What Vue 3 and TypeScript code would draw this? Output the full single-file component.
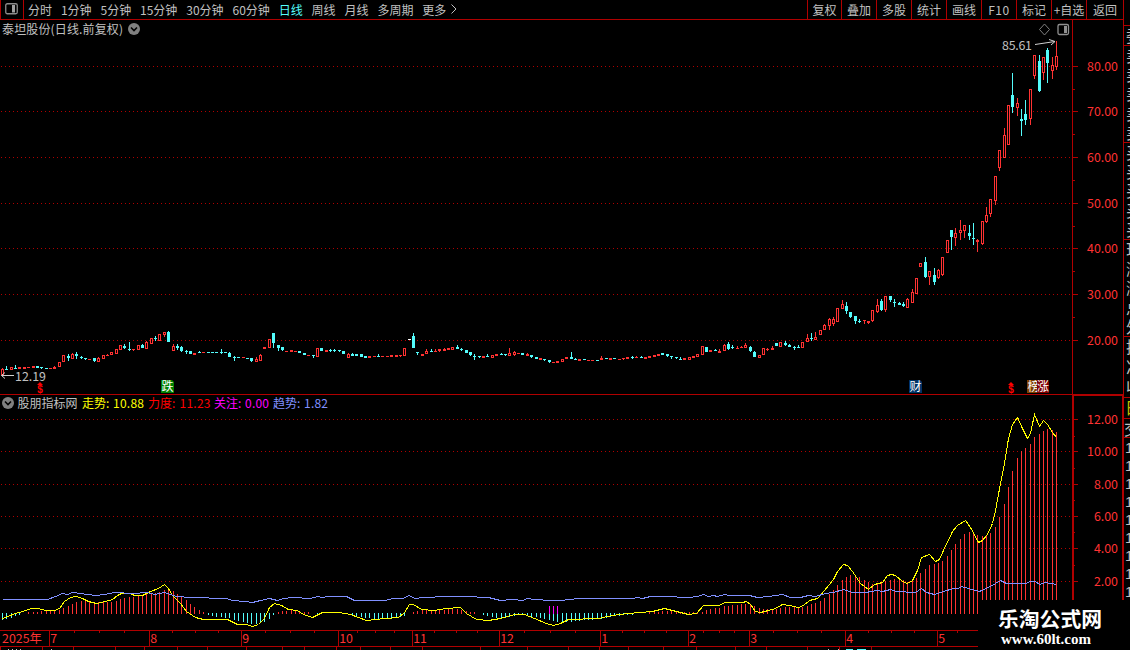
<script setup lang="ts">
interface Candle { x: number; up: boolean; hi: number; top: number; bot: number; lo: number; white: boolean }

const STEP = 1054 / 241
const xAt = (i: number): number => Math.round(2 + i * STEP)

// Each entry: direction, high, body top, body bottom, low (panel units)
const candleSource = `
r 368 369 374 375,c 366 369 369,r 367 367 369,c 365 368 368,r 367 367 368,r 367 367 368,r 367 367 367,r 366 366 367,c 366 366 367,c 367 367 367 368,
c 368 368 368,r 368 368 368,r 366 367 368,r 362 362 366,r 355 355 361,c 354 356 357 360,r 353 354 358,c 352 354 355 358,c 356 357 357 358,c 358 358 358 359,
r 359 359 359,c 358 358 360 361,r 357 358 361,r 355 355 358,r 354 355 355,r 352 352 354,r 349 349 353,r 345 345 349,c 344 346 347 348,c 342 349 349 350,
r 349 349 349 350,r 345 345 349,c 344 345 347,r 341 342 348,r 338 338 343,c 336 338 338 340,r 334 334 340,r 332 332 334 336,c 331 332 341,r 344 346 350,
c 344 346 347 349,c 346 347 350 351,c 350 351 351 353,c 351 351 353,r 353 353 354,c 351 352 352,r 352 352 352,c 352 352 352,c 352 352 352,c 352 352 352,
c 349 352 352 353,c 352 352 352,c 352 353 356,c 356 357 357 360,c 357 357 357,r 357 357 357,c 358 358 358,c 358 358 360 361,r 357 359 361,r 354 355 360,
r 347 347 348,r 339 339 347,c 333 333 342 347,c 345 345 347 350,c 347 347 349 350,r 351 351 351,r 350 350 351,r 351 351 351,c 351 351 352,c 353 353 354,
r 355 355 355,c 355 355 355 357,r 348 348 356,c 348 348 350,r 350 350 351,c 349 350 350 351,c 349 350 350 351,c 350 350 350 351,c 351 351 353,r 353 354 357,
c 353 354 355,c 354 354 355,c 354 354 356,c 356 356 357,r 356 356 357,r 356 356 356,c 354 356 356,r 356 356 356,r 356 356 356,r 355 355 356,
r 355 355 356,r 355 355 355 356,r 348 348 355,w 339 339 339,c 333 336 347,c 352 352 352 354,r 354 354 355,r 349 351 353,c 349 351 351,r 349 351 351,
r 349 349 350 351,r 348 349 350,r 348 348 349,r 347 347 349,c 345 347 348,c 348 349 349 350,c 350 350 352,c 352 352 354 355,c 354 356 356 359,c 356 356 356 357,
r 356 356 357,c 354 356 356,r 355 355 357,r 354 354 355,c 353 354 354,c 354 354 354 355,r 348 353 355,r 351 352 354 355,r 353 353 353,c 353 353 354,
r 353 354 355,c 355 355 356 357,c 357 357 358,r 358 358 359,c 359 359 359 360,c 360 360 361 362,r 362 362 362,r 361 361 362,r 359 359 361,r 357 357 358,
c 352 357 358,c 358 359 359,r 359 359 360,c 359 359 359,r 360 360 360,r 360 360 360,c 360 360 360,r 356 358 359,c 358 358 358,r 358 358 359,
c 358 358 358,r 359 359 359,r 358 358 358 359,r 357 357 358,c 356 357 357 358,r 356 357 357,c 356 357 357,r 357 357 358,r 356 356 357,r 355 355 356,
r 354 354 355,c 353 353 354,c 354 354 355 356,c 356 356 356 358,c 357 357 357 358,c 357 359 359,r 358 358 359,r 357 357 359,r 356 356 357,r 354 354 356,
r 346 346 354,c 347 347 351,r 350 350 351,c 349 350 350,r 349 351 352,r 344 345 350,c 342 344 348 349,c 345 347 347 348,r 346 348 348,r 346 347 347,
r 343 345 347,c 346 347 350 351,c 351 352 356,r 355 355 357,r 348 348 354,r 348 349 349 350,r 346 348 349,c 343 343 345,r 342 342 346,c 341 343 344 345,
c 344 345 346,c 346 347 347 349,c 345 347 347,r 342 342 347,r 334 338 341,c 333 338 338 340,r 332 337 339,r 330 330 334,r 324 325 329,r 318 319 325 329,
r 317 319 323 325,r 308 308 321,r 300 304 308,c 302 306 310 313,c 312 312 316 317,c 316 316 320 323,c 319 321 321 322,r 320 320 320 323,r 321 321 322 323,r 310 310 320 321,
r 299 305 311 312,c 299 301 309 310,r 296 296 309 311,c 296 296 299 301,c 299 302 302 306,c 302 303 304,c 302 304 305 306,r 298 299 307,r 289 292 302,r 278 278 293,
r 263 263 266,c 257 262 276 277,r 271 271 276 284,c 268 275 281 284,r 269 270 277 278,r 257 257 274 275,r 240 240 252,c 230 230 236 249,r 228 233 237 245,r 220 230 232 239,
r 225 225 230 237,c 225 233 235 239,c 223 238 238 244,r 239 240 241 251,r 221 221 243 244,r 207 215 221 222,r 199 199 213 216,r 176 176 200 204,r 150 150 167 170,r 128 135 157,
r 105 105 144,c 73 95 106 112,r 98 103 107 115,c 109 119 120 135,c 100 114 119 124,r 89 89 118 124,r 55 55 75 78,c 55 61 90 91,r 57 57 72 79,c 48 50 62 82,
r 57 65 70 78,r 41 56 66 69`

const candles: Candle[] = candleSource.trim().split(',').map((row, i) => {
  const [kind, h, t, b, l] = row.trim().split(' ')
  return { x: xAt(i), up: kind === 'r', white: kind === 'w', hi: +h, top: +t, bot: +b, lo: +(l ?? b) }
})

// Momentum histogram: far end of every bar, measured against the zero line
const ZERO = 613
const strength: number[] = [
  619, 618, 617, 615, 614, 613, 612.9, 612, 612, 611, 610, 611, 611, 610, 608, 606, 604, 602, 601, 601,
  601, 602, 602, 601, 602, 602, 601, 599, 598, 597, 597, 596, 595, 594, 593, 593, 592, 590, 589, 591,
  594, 597, 600, 604, 607, 610, 612.9, 614, 615, 616, 616, 617, 617, 619, 620, 621, 622, 623, 623, 622,
  621, 618, 614, 612.9, 611, 611, 610, 610, 611, 612, 612.9, 613, 614, 613, 613, 613, 613, 613, 613, 613,
  614, 615, 616, 617, 617, 618, 618, 618, 618, 617, 617, 616, 615, 613, 612, 611, 610, 610, 610, 610,
  610, 610, 609, 609, 609, 610, 611, 612, 612.9, 613, 614, 615, 616, 617, 617, 617, 616, 615, 614, 614,
  615, 616, 616, 617, 618, 619, 620, 621, 621, 621, 621, 620, 620, 619, 619, 619, 618, 618, 617, 616,
  615, 615, 614, 614, 614, 613, 613, 613, 612.9, 612, 612, 611, 611, 611, 611, 612, 612, 612.9, 612.9, 612.9,
  612, 610, 609, 608, 608, 606, 606, 605, 605, 604, 604, 605, 606, 608, 609, 609, 609, 609, 608, 607,
  607, 607, 607, 607, 606, 604, 603, 601, 598, 594, 590, 585, 580, 577, 575, 576, 577, 580, 582, 584,
  583, 582, 581, 580, 579, 579, 580, 582, 581, 578, 573, 569, 565, 564, 563, 561, 556, 550, 544, 539,
  534, 532, 533, 535, 536, 536, 533, 527, 517, 504, 487, 471, 458, 451, 448, 444, 437, 434, 431, 429,
  430, 432,
]
const bars = strength
  .map((v, i) => ({ x: xAt(i), up: v < ZERO, y: v < ZERO ? Math.floor(v) : ZERO, h: v < ZERO ? 614 - Math.floor(v) : v - ZERO + 1, v }))
  .filter((b) => b.v !== ZERO)
const watchBars = [549, 553, 557]

const trend = `2,618 7,616 15,613 22,611 31,608 38,608 45,610 54,610 59,608 64,601 70,597 76,596 82,598 88,601 96,603 105,601
112,599 117,595 121,593 130,593 134,595 142,595 150,591 158,588 164,584 168,588 172,595 180,603 186,611 195,617 203,619 227,619
237,624 246,624 252,626 258,624 264,618 269,607 274,603 281,605 288,609 297,610 303,614 312,617 322,612 338,612 350,614 358,617
366,620 375,619 385,618 398,617 404,612 409,604 413,604 421,609 434,610 445,608 460,607 466,613 476,619 488,620 500,618 514,614
524,614 534,618 546,623 553,625 560,623 568,619 598,618 612,615 628,613 652,611 664,608 676,611 688,614 696,613 703,605 719,605
724,602 742,602 746,601 750,604 755,611 760,612 768,610 775,608 782,604 789,605 798,607 803,605 809,600 817,598 824,590 833,579
837,571 843,564 847,565 852,571 860,583 868,589 874,584 882,582 887,575 891,574 895,575 902,581 907,583 912,580 917,570 921,557
929,554 935,561 939,559 943,550 952,531 957,525 965,520 970,527 978,542 982,540 987,534 992,523 995,510 1000,483 1004,463 1008,438
1012,424 1017,417 1022,428 1027,438 1030,433 1034,414 1039,426 1043,420 1047,424 1052,432 1056,437`

const drift = `2,599 47,599 55,596 62,593 67,594 72,592 80,593 95,595 104,594 114,592 132,593 147,592 154,594 164,592 176,596
190,597 226,598 232,600 244,601 252,602 260,600 269,598 277,600 283,598 292,597 310,598 317,596 322,597 328,596 346,596 354,600
385,600 392,598 402,598 409,595 414,598 424,597 446,596 464,596 488,597 500,600 512,599 522,600 527,598 534,599 550,600 560,600
578,598 632,598 637,597 642,598 650,596 664,596 688,597 697,596 703,594 708,596 713,595 717,596 724,594 729,595 749,595 757,597
768,596 782,594 790,597 800,597 808,595 815,596 825,593 833,592 843,589 852,592 865,592 877,590 882,591 890,589 896,591 915,592
921,588 926,592 934,594 943,591 953,588 958,588 961,586 968,588 979,591 990,586 1000,580 1006,583 1025,583 1030,581 1035,581
1039,584 1045,582 1056,584`

const periods = ['分时', '1分钟', '5分钟', '15分钟', '30分钟', '60分钟', '日线', '周线', '月线', '多周期', '更多']
const tools = ['复权', '叠加', '多股', '统计', '画线', 'F10', '标记', '+自选', '返回']

const priceTicks = [
  { y: 66, t: '80.00' }, { y: 111, t: '70.00' }, { y: 157, t: '60.00' }, { y: 203, t: '50.00' },
  { y: 248, t: '40.00' }, { y: 294, t: '30.00' }, { y: 340, t: '20.00' },
]
const priceMinor = [89, 134, 180, 226, 271, 317]
const subTicks = [
  { y: 419, t: '12.00' }, { y: 451, t: '10.00' }, { y: 484, t: '8.00' },
  { y: 516, t: '6.00' }, { y: 548, t: '4.00' }, { y: 581, t: '2.00' },
]
const subMinor = [436, 468, 500, 532, 565]

const legend = [
  { x: 82, vx: 113, name: '走势:', value: '10.88', c: 'yellow' },
  { x: 148, vx: 179.5, name: '力度:', value: '11.23', c: 'red' },
  { x: 214, vx: 245, name: '关注:', value: '0.00', c: 'magenta' },
  { x: 273, vx: 304, name: '趋势:', value: '1.82', c: 'blue' },
]

const months = [
  { x: 49, t: '7' }, { x: 149, t: '8' }, { x: 241, t: '9' }, { x: 338, t: '10' }, { x: 412, t: '11' }, { x: 499, t: '12' },
  { x: 600, t: '1' }, { x: 688, t: '2' }, { x: 749, t: '3' }, { x: 845, t: '4' }, { x: 937, t: '5' },
]
const weekTicks = [74, 99, 124, 172, 195, 218, 265, 290, 314, 357, 375, 394, 434, 456, 477, 524, 550, 575, 622, 644, 666, 703, 719, 734, 773, 797, 821, 868, 891, 914, 957]
const lowerTicks = [0, 42, 73, 115, 144, 177, 207, 246, 282, 304, 336, 360, 390, 422, 480, 527, 568, 599, 628, 663, 696, 735, 766, 807, 839, 871]

const quoteGroups = [
  { cls: 'ratio', rows: ['委比'] },
  { cls: 'five', rows: ['卖五', '卖四', '卖三', '卖二', '卖一'] },
  { cls: 'five', rows: ['买一', '买二', '买三', '买四', '买五'] },
  { cls: 'five', rows: ['现价', '涨跌', '涨幅', '总量', '外盘'] },
  { cls: 'three', rows: ['换手', '净资', '收益'] },
  { cls: 'tab', rows: ['日'] },
  { cls: 'state', rows: ['交'] },
  { cls: 'deals', rows: ['14', '14', '14', '14', '14', '14', '14', '14', '14'] },
]
</script>

<template>
  <div class="screen">
    <main class="charts">
      <header class="toolbar">
        <div class="panel-toggle">
          <svg width="13" height="12" viewBox="0 0 13 12">
            <rect x="0.75" y="0.75" width="11.5" height="10" rx="1.5" fill="none" stroke="#8c8c8c" stroke-width="1.3" />
            <rect x="7" y="2" width="3" height="7.5" fill="#a0a0a0" />
          </svg>
        </div>
        <nav class="periods">
          <span v-for="p in periods" :key="p" :class="{ active: p === '日线' }">{{ p }}</span>
          <svg class="more" width="6" height="10" viewBox="0 0 6 10"><path d="M0.5 0.5L5 5L0.5 9.5" fill="none" stroke="#c0c0c0" /></svg>
        </nav>
        <nav class="tools"><span v-for="t in tools" :key="t">{{ t }}</span></nav>
      </header>

      <svg class="price" width="1123" height="375" viewBox="0 20 1123 375">
        <g class="grid">
          <line v-for="t in priceTicks" :key="t.y" x1="1" x2="1072" :y1="t.y + 0.5" :y2="t.y + 0.5" />
        </g>
        <g class="frame">
          <rect x="1072" y="20" width="1" height="375" />
          <rect x="0" y="394" width="1123" height="1" />
          <rect v-for="t in priceTicks" :key="t.y" x="1073" :y="t.y" width="5" height="1" />
          <rect v-for="y in priceMinor" :key="y" x="1073" :y="y" width="2" height="1" />
        </g>
        <g class="candles">
          <g v-for="(c, i) in candles" :key="i" :class="c.white ? 'flat' : c.up ? 'up' : 'down'">
            <rect v-if="c.hi < c.top" :x="c.x" :y="c.hi" width="1" :height="c.top - c.hi" />
            <rect v-if="c.lo > c.bot" :x="c.x" :y="c.bot + 1" width="1" :height="c.lo - c.bot" />
            <rect v-if="c.up && c.bot - c.top > 1" class="hollow" :x="c.x - 0.5" :y="c.top + 0.5" width="2" :height="c.bot - c.top" />
            <rect v-else :x="c.x - 1" :y="c.top" width="3" :height="c.bot - c.top + 1" />
          </g>
        </g>
        <text class="title" x="2" y="33.5" textLength="121">泰坦股份(日线.前复权)</text>
        <g class="chevron"><circle cx="134" cy="29" r="6" /><path d="M131 27.5L134 30.5L137 27.5" /></g>
        <path class="diamond" d="M1044.5 24L1049.5 29.5L1044.5 35L1039.5 29.5Z" />
        <rect x="1058" y="24.5" width="10.5" height="10" rx="1.5" fill="none" stroke="#909090" stroke-width="1.3" />
        <rect x="1064" y="26" width="3" height="7" fill="#909090" />
        <text class="note" x="1002" y="50" textLength="30">85.61</text>
        <path class="arrow" d="M1035 44.5L1055 41.5M1049 39.5L1055 41.5L1051 45" />
        <path class="arrow" d="M1.5 375.5H14M5 372.5L1.5 375.5L5 378.5" />
        <text class="note" x="15" y="381" textLength="31">12.19</text>
        <g v-for="x in [40, 1011]" :key="x" class="dollar">
          <path :d="`M${x - 3} 385L${x} 382L${x + 3} 385Z`" />
          <text :x="x" y="393" text-anchor="middle">$</text>
        </g>
        <g class="badge">
          <path d="M161 380H172L174 382V393H161Z" fill="#008000" /><text x="161.5" y="391">跌</text>
          <path d="M909 380H920L922 382V393H909Z" fill="#003366" /><text x="909.5" y="391">财</text>
          <path d="M1027 380H1038V393H1027Z" fill="#804000" /><text x="1027.5" y="391">榜</text>
          <path d="M1037 380H1047L1049 382V393H1037Z" fill="#800000" /><text x="1037" y="391">涨</text>
        </g>
        <text v-for="t in priceTicks" :key="t.t" class="scale" x="1118" :y="t.y + 5">{{ t.t }}</text>
      </svg>

      <svg class="indicator" width="1124" height="235" viewBox="0 395 1124 235">
        <g class="grid">
          <line v-for="t in subTicks" :key="t.y" x1="1" x2="1072" :y1="t.y + 0.5" :y2="t.y + 0.5" />
        </g>
        <g class="frame">
          <rect x="1072" y="394" width="2" height="236" />
          <rect x="1072" y="395" width="52" height="1" />
          <rect x="1122" y="395" width="2" height="235" />
          <rect v-for="t in subTicks" :key="t.y" x="1074" :y="t.y" width="4" height="1" />
          <rect v-for="y in subMinor" :key="y" x="1074" :y="y" width="1" height="1" />
        </g>
        <g class="bars">
          <rect v-for="b in bars" :key="b.x" :class="b.up ? 'rise' : 'fall'" :x="b.x" :y="b.y" width="1" :height="b.h" />
          <rect v-for="x in watchBars" :key="x" class="watch" :x="x" y="606" width="1" height="8" />
        </g>
        <polyline class="trend" :points="trend" transform="translate(0.5 0.5)" />
        <polyline class="drift" :points="drift" transform="translate(0.5 0.5)" />
        <g class="chevron"><circle cx="8" cy="403" r="6" /><path d="M5 401.5L8 404.5L11 401.5" /></g>
        <text class="title" x="17.5" y="407.5">股朋指标网</text>
        <g v-for="l in legend" :key="l.name" :class="['legend', l.c]">
          <text :x="l.x" y="407.5">{{ l.name }}</text>
          <text :x="l.vx" y="407.5" :textLength="l.value.length === 5 ? 31 : 24">{{ l.value }}</text>
        </g>
        <text v-for="t in subTicks" :key="t.t" class="scale" x="1118" :y="t.y + 5">{{ t.t }}</text>
      </svg>

      <svg class="dates" width="1123" height="20" viewBox="0 630 1123 20">
        <g class="frame">
          <rect x="0" y="630" width="1123" height="1" />
          <rect x="0" y="646" width="1123" height="1" />
          <rect v-for="m in months" :key="m.x" :x="m.x" y="630" width="1" height="17" />
          <rect v-for="x in weekTicks" :key="x" :x="x" y="631" width="1" height="2" />
          <rect v-for="x in lowerTicks" :key="x" :x="x" y="647" width="1" height="3" />
        </g>
        <text class="date" x="2" y="643">2025年</text>
        <text v-for="m in months" :key="m.x" class="date" :x="m.x + 1.2" y="643">{{ m.t }}</text>
        <g class="clipped">
          <path d="M8 649.5h1m3 0h1m3 0h1m3 0h1M51 649.5h1M828 649.5h1m9 0h1" />
          <path class="cyan" d="M846 649.5h7m4 0h9" />
        </g>
      </svg>
    </main>

    <aside class="quotes">
      <section v-for="(g, i) in quoteGroups" :key="i" :class="g.cls">
        <span v-for="(r, k) in g.rows" :key="k">{{ r }}</span>
      </section>
    </aside>

    <div class="watermark">
      <strong>乐淘公式网</strong>
      <span>www.60lt.com</span>
    </div>
  </div>
</template>

<style>
body { background: #000; overflow: hidden; }
</style>

<style scoped>
.screen {
  position: relative;
  display: grid;
  grid-template-columns: 1123px 7px;
  width: 1130px;
  height: 650px;
  overflow: hidden;
  background: #000;
  color: #c0c0c0;
  font: 12px/19px "Noto Sans CJK SC", "Liberation Sans", sans-serif;
}
.charts { display: flex; flex-direction: column; min-width: 0; }
.charts > svg { display: block; flex: none; }
.indicator { overflow: hidden; }
.toolbar { display: flex; height: 19px; border-bottom: 1px solid #b00000; flex: none; }
.panel-toggle { width: 24px; border-left: 1px solid #b00000; border-right: 1px solid #b00000; display: flex; align-items: center; padding: 0 0 2px 4px; box-sizing: border-box; }
.periods { display: flex; gap: 8.9px; padding-left: 4px; flex: 1; white-space: nowrap; }
.periods .active { color: #54fcfc; }
.more { margin: 4px 0 0 -4px; }
.tools { display: flex; }
.toolbar span { line-height: 19px; }
.tools span { width: 35px; box-sizing: border-box; border-left: 1px solid #b00000; text-align: center; white-space: nowrap; }
.tools span:first-child { width: 34px; }
.tools span:last-child { width: 37px; }
.tools span:nth-child(6) { letter-spacing: 0.6px; }

svg text { font-size: 12px; fill: #c0c0c0; }
.grid line { stroke: #b00000; stroke-width: 1; stroke-dasharray: 1 3; shape-rendering: crispEdges; }
.frame rect { fill: #b00000; shape-rendering: crispEdges; }
.candles rect, .bars rect { shape-rendering: crispEdges; }
.up rect { fill: #ff3232; }
.up .hollow { fill: #000; stroke: #ff3232; stroke-width: 1; }
.down rect { fill: #54fcfc; }
.flat rect { fill: #fff; }
.rise { fill: #ff3232; }
.fall { fill: #54fcfc; }
.watch { fill: #ff00ff; }
.trend, .drift { fill: none; stroke-width: 1; shape-rendering: crispEdges; }
.trend { stroke: #ffff00; }
.drift { stroke: #8090ff; }
svg .scale { fill: #ff3232; text-anchor: end; font-size: 12.4px; }
svg .date { fill: #ff3232; font-size: 12.4px; }
svg .note { font-size: 12.4px; }
.chevron circle { fill: #808080; }
.chevron path { fill: none; stroke: #000; stroke-width: 1.6; }
.diamond { fill: none; stroke: #808080; }
.arrow { fill: none; stroke: #d0d0d0; }
.dollar path { fill: #ff0000; }
svg .dollar text { fill: #ff0000; font-family: "Liberation Sans", sans-serif; font-weight: 700; font-size: 10px; }
.badge text { fill: #fff; }
.legend.yellow text { fill: #ffff00; }
.legend.red text { fill: #ff0000; }
.legend.magenta text { fill: #ff00ff; }
.legend.blue text { fill: #8090ff; }
.clipped path { stroke: #c0c0c0; stroke-width: 1; }
.clipped .cyan { stroke: #54fcfc; }

.quotes { border-left: 1px solid #b00000; padding-top: 25px; overflow: hidden; font-size: 16px; box-sizing: border-box; height: 650px; }
.quotes section { display: flex; flex-direction: column; border-top: 1px solid #b00000; box-sizing: border-box; padding-left: 2px; overflow: hidden; }
.quotes span { flex: 1; min-height: 0; white-space: nowrap; line-height: 19px; }
.quotes .ratio { height: 20px; }
.quotes .five { height: 97px; }
.quotes .three { height: 61px; }
.quotes .tab { height: 21px; padding-left: 1px; color: #c0c000; }
.quotes .state { height: 19px; padding-left: 0; }
.quotes .deals { height: 163px; font: 15px/18px "Liberation Sans", sans-serif; padding-left: 1px; }

.watermark {
  position: absolute;
  left: 978px;
  top: 600px;
  width: 152px;
  height: 50px;
  box-sizing: border-box;
  padding: 6px 8px 0 0;
  background: #000;
  color: #fff;
  display: flex;
  flex-direction: column;
  align-items: center;
}
.watermark strong { font: 700 20.8px/25px "Noto Sans CJK SC", sans-serif; }
.watermark span { font: 700 15px/16px "Liberation Serif", serif; margin-right: 8px; }
</style>
